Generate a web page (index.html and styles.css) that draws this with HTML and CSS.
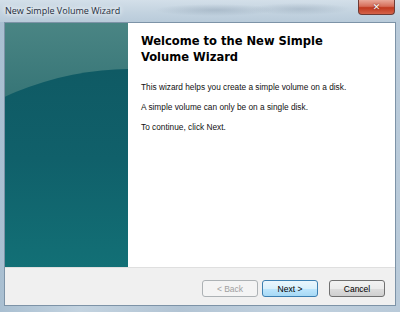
FILE: index.html
```html
<!DOCTYPE html>
<html lang="en">

<head>
    <meta charset="UTF-8">
    <meta name="viewport" content="width=device-width, initial-scale=1.0">
    <title>New Simple Volume Wizard</title>

    <link rel="stylesheet" href="styles.css">
</head>

<body>

    <div class="window">
        <div class="titlebar">
            <span class="title">New Simple Volume Wizard</span>
            <button class="btn-close" type="button">&#x2715;</button>
        </div>

        <div class="client">
            <div class="main">
                <div class="banner"></div>

                <div class="content">
                    <h1>Welcome to the New Simple Volume Wizard</h1>
                    <p>This wizard helps you create a simple volume on a disk.</p>
                    <p>A simple volume can only be on a single disk.</p>
                    <p>To continue, click Next.</p>
                </div>
            </div>

            <div class="footer">
                <button type="button" class="btn" disabled>&lt; Back</button>
                <button type="button" class="btn btn-default">Next &gt;</button>
                <button type="button" class="btn btn-cancel">Cancel</button>
            </div>
        </div>
    </div>

</body>
</html>
```

FILE: styles.css
```css
html,
body {
    margin: 0;
    padding: 0;
}

body {
    width: 400px;
    height: 312px;
    overflow: hidden;
    font-family: "Liberation Sans", Arial, sans-serif;
}

.window {
    display: flex;
    flex-direction: column;
    height: 312px;
    box-sizing: border-box;
    padding: 0 4px 6px 4px;
    background: linear-gradient(90deg, #a9bfd1 0%, #c3d3e0 20%, #b2c4d4 45%, #c0d0de 70%, #b9cad9 100%);
}

.titlebar {
    position: relative;
    height: 22px;
    display: flex;
    align-items: center;
    background:
        radial-gradient(ellipse 60px 6px at 215px 10px, rgba(120, 140, 160, 0.35), transparent),
        radial-gradient(ellipse 50px 6px at 300px 9px, rgba(120, 140, 160, 0.3), transparent),
        linear-gradient(180deg, #d3dfe9 0%, #c2d2df 60%, #b9cbda 100%);
    margin: 0 -4px;
    padding: 0 5px;
}

.title {
    font-family: "Open Sans", "Noto Sans", sans-serif;
    font-size: 9px;
    color: #1f2e3d;
    text-shadow: 0 0 4px #ffffff, 0 0 6px #ffffff;
    margin-top: -1px;
}

.btn-close {
    position: absolute;
    top: 0;
    right: 5px;
    width: 37px;
    height: 15px;
    padding: 0;
    border: 1px solid #6e3b35;
    border-top: none;
    border-radius: 0 0 4px 4px;
    background: linear-gradient(180deg, #e9a899 0%, #d66e5a 45%, #c0391f 55%, #d5644b 100%);
    color: #ffffff;
    font-family: "DejaVu Sans", sans-serif;
    font-size: 9px;
    font-weight: bold;
    line-height: 14px;
    text-shadow: 0 0 2px #5a1a10;
}

.client {
    flex: 1;
    display: flex;
    flex-direction: column;
    border: 1px solid #7d93a7;
    background-color: #f0f0f0;
}

.main {
    display: flex;
    flex: 1;
    background-color: #fff;
    border-bottom: 1px solid #dfdfdf;
}

.banner {
    position: relative;
    width: 123px;
    overflow: hidden;
    background: linear-gradient(180deg, #4a8584 0%, #3a7879 25%, #2f6f72 45%);
}

.banner::before {
    content: "";
    position: absolute;
    left: -174px;
    top: 46px;
    width: 600px;
    height: 600px;
    border-radius: 50%;
    background: linear-gradient(180deg, #0f5a64 0%, #10606a 15%, #137479 38%);
}

.content {
    flex: 1;
    padding: 10px 12px 0 13px;
    color: #000;
}

h1 {
    max-width: 200px;
    font-family: "DejaVu Sans Condensed", "DejaVu Sans", Verdana, sans-serif;
    font-stretch: condensed;
    font-size: 12.8px;
    font-weight: bold;
    line-height: 16px;
    margin: 0 0 17px 0;
    color: #000;
}

.content p {
    font-size: 8.3px;
    line-height: 11px;
    margin: 0 0 9px 0;
    color: #111;
}

.footer {
    display: flex;
    justify-content: flex-end;
    height: 37px;
    box-sizing: border-box;
    padding: 12px 10px 0 0;
}

.btn {
    width: 56px;
    height: 17px;
    margin-left: 4px;
    padding: 0;
    font-family: "Liberation Sans", Arial, sans-serif;
    font-size: 8.5px;
    color: #000;
    border: 1px solid #707070;
    border-radius: 3px;
    background: linear-gradient(180deg, #f2f2f2 0%, #ebebeb 50%, #dddddd 51%, #cfcfcf 100%);
}

.btn:disabled {
    color: #a0a0a0;
    border-color: #adb2b5;
    background: #f4f4f4;
}

.btn-default {
    border-color: #3c7fb1;
    background: linear-gradient(180deg, #eaf6fd 0%, #d9f0fc 50%, #bee6fd 51%, #a7d9f5 100%);
}

.btn-cancel {
    margin-left: 11px;
}
```
